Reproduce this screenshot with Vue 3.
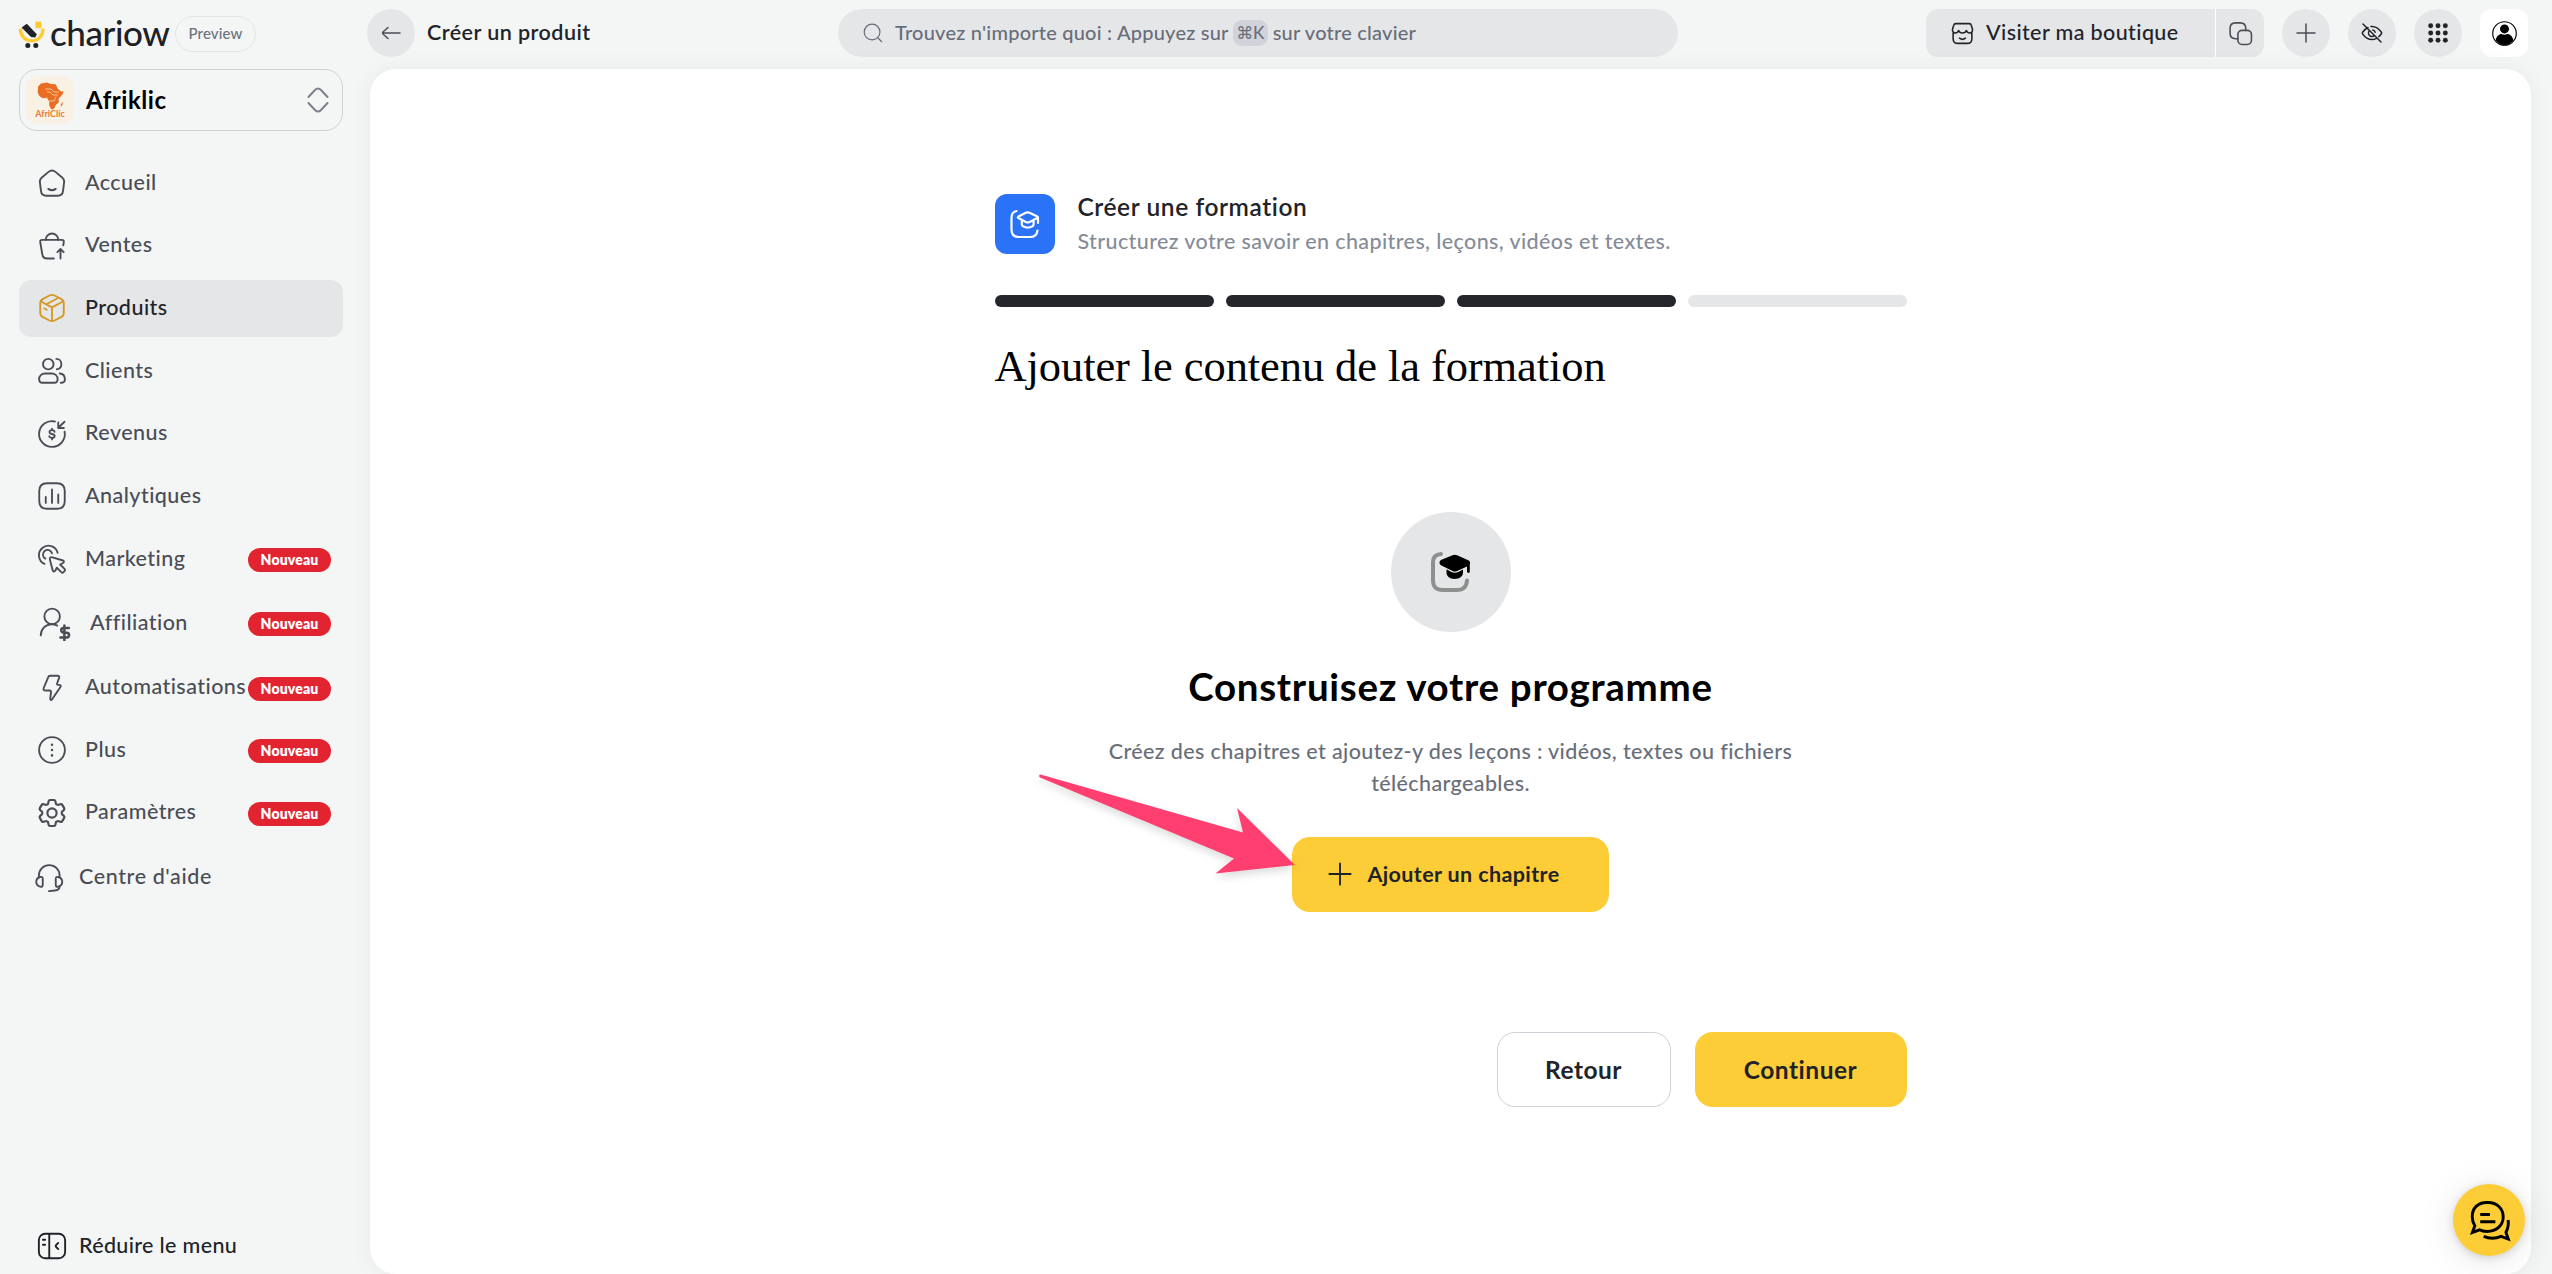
<template>
  <div class="app">
    <aside class="sidebar">
      <div class="brand">
        <svg class="brand-mark" viewBox="0 0 28 30">
          <path d="M2.5 8.5v1.2a11.2 11.2 0 0 0 22.4 0V8.5" fill="none" stroke="#ffcb35" stroke-width="3.4" />
          <path d="M17.4 1.6h6v6.6h-6z" fill="#ffcb35" />
          <path d="m3.6 7.6 5.2-3.8 10 10.4-1.6 3.400-4.200-.6z" fill="#202126" />
          <circle cx="9.8" cy="25.6" r="2.500" fill="#202126" />
          <circle cx="17.8" cy="25.6" r="2.500" fill="#202126" />
        </svg>
        <span class="brand-name">chariow</span>
        <span class="preview">Preview</span>
      </div>

      <div class="store">
        <div class="store-logo">
          <svg viewBox="0 0 48 48">
            <path
              d="M12 10.500 15 7.600l6-1.200 4 1.600 4.600.3 2.500 4.600 3 2.600 2.400-.2-.7 2.700-4.200 4.700.2 3.600-3 2.800-1.300 3-2 1.400-1.600-.4-1.800-4 .1-3.600-1.800-2.600-1.200-1-3.600.3-3.300-2.200-1.600-3.600zM34.800 28.500l2.200-3-.6 3.600-1.600 1.600z"
              fill="#ea6d24"
            />
            <path d="M19 13h6l3 3h5M21 16h3l3 3h5M20.500 21l1.600 4h6l2-4.500" fill="none" stroke="#fbe3c8" stroke-width="0.7" />
          </svg>
          <span>AfriClic</span>
        </div>
        <span class="store-name">Afriklic</span>
        <svg class="store-chevrons" viewBox="0 0 24 26">
          <path d="m2.500 10 6.700-7.200c1.800-1.700 3.800-1.700 5.600 0L21.500 10M2.500 16l6.700 7.200c1.800 1.700 3.800 1.700 5.600 0L21.500 16" />
        </svg>
      </div>

      <nav class="menu">
        <a
          v-for="item in menu"
          :key="item.label"
          class="menu-item"
          :class="[item.kind, { active: item.active }]"
        >
          <svg class="icon" :viewBox="item.viewBox || '0 0 24 24'">
            <path v-for="(d, i) in item.paths" :key="i" :d="d" />
            <path v-if="item.bold" :d="item.bold" stroke-width="2" />
          </svg>
          <span class="menu-label">{{ item.label }}</span>
          <span v-if="item.isNew" class="badge">Nouveau</span>
        </a>
      </nav>

      <a class="collapse">
        <svg class="icon" viewBox="0 0 24 24">
          <rect x="1.500" y="2.200" width="21" height="19.600" rx="5" />
          <path d="M9.800 2.500v19M4.700 7h1.800M4.700 11h1.800M17 9.500l-1.700 1.700c-.5.500-.5 1.100 0 1.600L17 14.500" />
        </svg>
        <span>Réduire le menu</span>
      </a>
    </aside>

    <div class="main">
      <header class="topbar">
        <div class="round back">
          <svg class="icon" viewBox="0 0 24 24"><path d="M3.500 12H21M9 6.500l-4.500 4c-1 1-1 2 0 3l4.500 4" /></svg>
        </div>
        <span class="page-title">Créer un produit</span>

        <div class="search">
          <svg class="icon" viewBox="0 0 24 24"><circle cx="11" cy="11" r="8.600" /><path d="m17.500 17.500 4 4" /></svg>
          <span>Trouvez n'importe quoi : Appuyez sur</span>
          <kbd>⌘K</kbd>
          <span>sur votre clavier</span>
        </div>

        <div class="actions">
          <div class="shop">
            <svg class="icon" viewBox="0 0 24 24">
              <path d="M3 11.500V17c0 3.300 1.300 4.500 4.500 4.500h9c3.200 0 4.500-1.200 4.500-4.500v-5.500M5.500 2.500h13c1.200 0 1.600.5 1.900 1.600L21.600 8c.2 2-.8 3.500-2.700 3.500-1.500 0-2.700-1-3.200-2.300-.5 1.400-1.900 2.300-3.700 2.300s-3.200-.9-3.700-2.300C7.800 10.500 6.600 11.500 5.100 11.500 3.200 11.500 2.200 10 2.400 8l1.200-3.900c.3-1.100.7-1.600 1.900-1.600zM9.200 16.500c1.600 1.300 4 1.300 5.600 0" />
            </svg>
            <span>Visiter ma boutique</span>
          </div>
          <div class="copy">
            <svg class="icon" viewBox="0 0 24 24">
              <rect x="9.500" y="9" width="13" height="13.500" rx="4" />
              <path d="M9.500 17H7.200C3.500 17 2 15.500 2 11.800V7C2 3.300 3.500 1.800 7.200 1.800h4.600C15.500 1.800 17 3.300 17 7v2" />
            </svg>
          </div>
          <div class="round">
            <svg class="icon" viewBox="0 0 24 24"><path d="M12 3v18M3 12h18" /></svg>
          </div>
          <div class="round hide">
            <svg class="icon" viewBox="0 0 24 24">
              <path d="M8 6.500C5.600 7.700 3.800 9.500 2.600 11.200c-.4.600-.4 1 0 1.600C4.300 15.300 7.600 18.600 12 18.600c1.500 0 2.900-.4 4.200-1M11 5.500c4.900-.5 8.500 3 10.400 5.700.4.600.4 1 0 1.600-.8 1.100-1.600 2-2.600 2.800M9.500 9.700a3.400 3.400 0 0 0 4.900 4.800M12.800 9a3.300 3.300 0 0 1 2.400 2.300M3 3l18 18" />
            </svg>
          </div>
          <div class="round">
            <svg class="dots" viewBox="0 0 24 24">
              <template v-for="y in [4, 12, 20]" :key="y">
                <circle v-for="x in [4, 12, 20]" :key="x" :cx="x" :cy="y" r="2.700" />
              </template>
            </svg>
          </div>
          <div class="avatar">
            <svg viewBox="0 0 24 24">
              <circle cx="12" cy="12" r="11.300" fill="#fff" stroke="#000" stroke-width="1.100" />
              <circle cx="12" cy="7.600" r="4.300" />
              <path d="M3.500 18.500c.7-3.700 3.200-6 5.800-6 1.700 1 3.700 1 5.400 0 2.600 0 5.100 2.300 5.800 6A10.800 10.800 0 0 1 12 23.300a10.800 10.800 0 0 1-8.500-4.800z" />
            </svg>
          </div>
        </div>
      </header>

      <main class="panel">
        <div class="content">
          <div class="head">
            <div class="head-icon">
              <svg class="icon" viewBox="0 0 32 32">
                <path d="M7.500 3C4 3.600 2.500 5.800 2.500 10v11.500c0 5 2.200 7.500 7.300 7.500h11.400c4.600 0 6.800-2.200 7.300-6.500" />
                <path d="m9.500 8.600 7.300-3.800c1.300-.6 2.400-.6 3.700 0l7.800 3.800c.9.500.9 1 0 1.500l-7.700 3.800c-1.300.6-2.500.6-3.800 0L9.500 10.100c-.9-.5-.9-1 0-1.500zM29 9.600V15M12.800 12v4.300c0 1 .4 1.500 1.200 2 3 1.700 6.400 1.700 9.400 0 .8-.5 1.200-1 1.200-2V12" />
              </svg>
            </div>
            <div>
              <h1>Créer une formation</h1>
              <p>Structurez votre savoir en chapitres, leçons, vidéos et textes.</p>
            </div>
          </div>

          <div class="steps">
            <span v-for="n in 4" :key="n" :class="{ done: n <= currentStep }"></span>
          </div>

          <h2 class="step-title">Ajouter le contenu de la formation</h2>

          <section class="empty">
            <div class="empty-icon">
              <svg viewBox="0 0 44 44">
                <path d="M12 4C6.500 4.500 4 7 4 12v18c0 7 3 10 10 10h14c6.500 0 9.600-3 10-9.500" fill="none" stroke="#8e908f" stroke-width="4" stroke-linecap="round" />
                <path d="M12.500 9.800 23.500 5.200c1.700-.7 3-.7 4.700 0l11.500 5.200c1.600.8 1.800 2.600 1.100 3.700V21.500a1.400 1.400 0 0 1-2.800 0v-5l-9.800 4.400c-1.700.7-3 .7-4.700 0L12.500 15.600c-2.600-1.300-2.600-4.500 0-5.800z" />
                <path d="M17.500 19.300l4.800 2.600c2.300 1.100 4.700 1.100 7 0l4.700-2.500v3.200c0 4-3.600 6.400-8.300 6.400s-8.200-2.400-8.200-6.400z" />
              </svg>
            </div>
            <h3>Construisez votre programme</h3>
            <p>Créez des chapitres et ajoutez-y des leçons : vidéos, textes ou fichiers téléchargeables.</p>
            <div class="add-wrap">
              <button class="btn primary add">
                <svg class="icon" viewBox="0 0 24 24"><path d="M12 3.500v17M3.500 12h17" /></svg>
                <span>Ajouter un chapitre</span>
              </button>
              <svg class="arrow" viewBox="0 0 270 120">
                <path d="M12.500 9.500 215 67.500 209 43l58 57-79.500 8.500L206 93.500 12 12.500c-1.500-1-1-3 .5-3z" />
              </svg>
            </div>
          </section>

          <div class="footer">
            <button class="btn outline">Retour</button>
            <button class="btn primary">Continuer</button>
          </div>
        </div>
      </main>
    </div>

    <div class="chat">
      <svg viewBox="0 0 44 44">
        <path d="M20.500 3.500h-1.500C10.200 3.500 4.300 9.500 4.300 17.800c0 4 1.300 7.200 2.700 9.500L4.500 34.200l7.300-2.700c2.300 1.300 5 1.700 7.700 1.700 9.500 0 16.500-6 16.500-14.800S29.500 3.500 20.500 3.500zM12.500 15.800h10M12.500 23.200h15.500M41 21.500c.8 4.500-.3 9-2.200 12.500l2.400 7-7.200-2.700c-5.500 2.300-12 2.600-18 0" />
      </svg>
    </div>
  </div>
</template>
<script setup>
import { ref } from 'vue'

const currentStep = ref(3)

const menu = ref([
  {
    label: 'Accueil',
    paths: [
      'M2.300 11.300c-.2-1.600.3-2.600 1.600-3.700l5.300-4.500c1.900-1.500 3.700-1.500 5.600 0l5.300 4.500c1.300 1.100 1.800 2.100 1.600 3.700l-.9 7.200c-.3 2.700-1.500 3.700-4.200 3.700H7.400c-2.700 0-3.900-1-4.200-3.700z',
      'M9 16.700c1.700 1.200 4.300 1.200 6 0',
    ],
  },
  {
    label: 'Ventes',
    paths: [
      'M13.500 22H8.200c-2.300 0-3.500-.8-3.900-3L2.600 9c-.2-1.300.3-1.900 1.600-1.900h15.600c1.300 0 1.800.6 1.600 1.900l-.4 2.500',
      'M7 7a5 5 0 0 1 10 0',
      'M18.800 22v-7.500m-2.500 2.400 2.500-2.600 2.500 2.600',
    ],
  },
  {
    label: 'Produits',
    active: true,
    paths: [
      'M10 2c1.300-.6 2.700-.6 4 0l5.200 2.700c1.600.9 2.200 1.600 2.200 3.200v8.200c0 1.600-.6 2.400-2.200 3.200L14 22c-1.300.6-2.700.6-4 0l-5.200-2.700c-1.600-.8-2.200-1.600-2.200-3.200V7.900c0-1.600.6-2.300 2.200-3.200z',
      'M3.200 6.800 12 11.500l8.800-4.700M12 11.500v10.800M7.500 9l9-4.800M5.800 12.400l2 1',
    ],
  },
  {
    label: 'Clients',
    paths: [
      'M13.200 6.500a4.200 4.200 0 1 1-8.400 0 4.200 4.200 0 0 1 8.400 0z',
      'M6.500 14h5.300c2.800 0 4.700 2 4.700 4.400 0 2-.9 3-2.600 3H4.300c-1.700 0-2.600-1-2.600-3C1.700 16 3.700 14 6.500 14z',
      'M15.500 2.300c2.400 0 4 1.900 4 4.200s-1.700 4.100-3.600 4.100',
      'M18.200 14c2.400.2 4 2 4.100 4.500.1 1.700-.9 2.800-2.400 2.900h-.9',
    ],
  },
  {
    label: 'Revenus',
    paths: [
      'M14.300 2A10.300 10.300 0 1 0 22.100 10.200',
      'M22 2.200l-4.700 4.600M17 2.800v4.400h4.500',
      'M14.100 10.200c-.2-.8-.9-1.300-2.100-1.300s-2 .5-2 1.500.9 1.400 2 1.600 2.100.6 2.100 1.600-.9 1.500-2.100 1.500-2-.5-2.200-1.400M12 7.800v1.100M12 15.100v1.200',
    ],
  },
  {
    label: 'Analytiques',
    paths: [
      'M8 1.800h8c4.300 0 6.200 1.900 6.200 6.200v8c0 4.300-1.900 6.200-6.200 6.200H8c-4.300 0-6.200-1.900-6.200-6.200V8c0-4.300 1.900-6.200 6.200-6.200z',
      'M7 12.800v4.700M12 6.700v10.800M17 10.700v6.800',
    ],
  },
  {
    label: 'Marketing',
    isNew: true,
    paths: [
      'M6 15.900A7.600 7.600 0 1 1 16.500 7',
      'M6.700 11.700A3.700 3.700 0 1 1 12 7.400',
      'M10.400 12.700c-.5-1.700.3-2.500 1.900-2l7.900 2.300c1.700.5 1.800 1.700.3 2.400l-2 1 3.500 3.500c.6.600.6 1.200 0 1.800l-.8.8c-.6.600-1.200.6-1.800 0L15.900 19l-1.100 2c-.9 1.500-2 1.300-2.400-.4z',
    ],
  },
  {
    label: 'Affiliation',
    kind: 'affiliation',
    isNew: true,
    viewBox: '0 0 28 28',
    paths: [
      'M18.300 8.300a6.200 6.200 0 1 1-12.400 0 6.200 6.200 0 0 1 12.400 0z',
      'M3 23.500c.2-5 3.800-8.900 8.700-8.900 1.700 0 3.200.4 4.500 1.100',
    ],
    bold: 'M25.500 17.600h-4.300a1.800 1.800 0 0 0 0 3.700h2.500a1.900 1.900 0 0 1 0 3.900h-5M21.900 15.600v12',
  },
  {
    label: 'Automatisations',
    isNew: true,
    paths: [
      'M8.900 3.500c.3-.9.7-1.300 1.600-1.300h6c1.200 0 1.600.7 1.200 1.700l-1.600 4.300c-.3.800 0 1.200.8 1.300h1c1.200.1 1.500 1 .7 1.900L12.100 21c-.9 1-1.700.6-1.500-.7l.6-5c.1-.9-.2-1.300-1.100-1.300H6.500c-1.200 0-1.600-.8-1.200-1.800z',
    ],
  },
  {
    label: 'Plus',
    isNew: true,
    paths: ['M22.300 12a10.300 10.300 0 1 1-20.600 0 10.300 10.300 0 0 1 20.600 0z'],
    bold: 'M12 7.700v.1M12 11.950v.1M12 16.200v.1',
  },
  {
    label: 'Paramètres',
    isNew: true,
    viewBox: '1.600 1.600 20.800 20.800',
    paths: [
      'M9.594 3.940c.09-.542.56-.94 1.110-.94h2.593c.55 0 1.020.398 1.110.94l.213 1.281c.063.374.313.686.645.87.074.04.147.083.22.127.325.196.72.257 1.075.124l1.217-.456a1.125 1.125 0 0 1 1.370.49l1.296 2.247a1.125 1.125 0 0 1-.26 1.431l-1.003.827c-.293.241-.438.613-.43.992a7.723 7.723 0 0 1 0 .255c-.008.378.137.75.43.991l1.004.827c.424.35.534.955.26 1.430l-1.298 2.247a1.125 1.125 0 0 1-1.369.491l-1.217-.456c-.355-.133-.75-.072-1.076.124a6.470 6.470 0 0 1-.22.128c-.331.183-.581.495-.644.869l-.213 1.281c-.09.543-.56.94-1.110.94h-2.594c-.55 0-1.019-.398-1.110-.94l-.213-1.281c-.062-.374-.312-.686-.644-.87a6.520 6.520 0 0 1-.22-.127c-.325-.196-.72-.257-1.076-.124l-1.217.456a1.125 1.125 0 0 1-1.369-.49l-1.297-2.247a1.125 1.125 0 0 1 .26-1.431l1.004-.827c.292-.24.437-.613.43-.991a6.932 6.932 0 0 1 0-.255c.007-.38-.138-.751-.43-.992l-1.004-.827a1.125 1.125 0 0 1-.26-1.430l1.297-2.247a1.125 1.125 0 0 1 1.370-.491l1.216.456c.356.133.751.072 1.076-.124.072-.044.146-.086.22-.128.332-.183.582-.495.644-.869l.214-1.280z',
      'M15.200 12a3.200 3.200 0 1 1-6.400 0 3.200 3.200 0 0 1 6.400 0z',
    ],
  },
  {
    label: "Centre d'aide",
    kind: 'help',
    paths: [
      'M3.900 11.500V10a8.300 8.300 0 0 1 16.600 0v1.500',
      'M5 11.200c1.500-.4 2 .2 2 1.500v4.700c0 1.300-.5 1.900-2 1.500-1.700-.4-3.200-1.700-3.200-3.900s1.500-3.300 3.200-3.800z',
      'M19.400 11.200c-1.500-.4-2 .2-2 1.500v4.700c0 1.300.5 1.900 2 1.500 1.700-.4 3.200-1.700 3.200-3.900s-1.500-3.300-3.200-3.800z',
      'M20.500 18.800c0 2-1.600 3-3.800 3.200l-4.700.5',
    ],
  },
])
</script>
<style>
body {
  margin: 0;
  background: #f4f6f6;
}
</style>
<style scoped>
.app {
  display: flex;
  width: 100%;
  height: 1274px;
  overflow: hidden;
  background: #f4f6f6;
  color: #212329;
  font-family: Lato, 'Open Sans', sans-serif;
  font-size: 21.5px;
  font-weight: 500;
  letter-spacing: 0.021em;
  position: relative;
}

.icon {
  fill: none;
  stroke: currentColor;
  stroke-width: 1.5;
  stroke-linecap: round;
  stroke-linejoin: round;
  flex: none;
}

h1,
h2,
h3,
p {
  margin: 0;
}

/* Sidebar */
.sidebar {
  display: flex;
  flex-direction: column;
  box-sizing: border-box;
  width: 370px;
  flex: none;
  padding: 0 27px 0 19px;
}

.brand {
  display: flex;
  align-items: center;
  height: 69px;
}

.brand-mark {
  width: 28px;
  height: 30px;
  margin-left: -1px;
}

.brand-name {
  width: 119px;
  margin: 0 6px 6px 4px;
  font-size: 35px;
  line-height: 40px;
  letter-spacing: -0.012em;
  color: #202126;
}

.preview {
  box-sizing: border-box;
  width: 81px;
  height: 36px;
  margin-bottom: 2px;
  border: 1px solid #e3e5e7;
  border-radius: 18px;
  font-size: 15px;
  line-height: 33px;
  letter-spacing: 0.01em;
  text-align: center;
  color: #6b717d;
}

.store {
  display: flex;
  align-items: center;
  box-sizing: border-box;
  height: 62px;
  padding: 0 12px 0 6px;
  border: 1px solid #cdd0d6;
  border-radius: 18px;
}

.store-logo {
  position: relative;
  width: 48px;
  height: 48px;
  border-radius: 12px;
  background: #f9f1e3;
}

.store-logo svg {
  display: block;
}

.store-logo span {
  position: absolute;
  left: 0;
  right: 0;
  bottom: 4px;
  font-size: 9px;
  font-weight: 700;
  line-height: 12px;
  letter-spacing: 0;
  text-align: center;
  color: #ea7a3a;
}

.store-name {
  flex: 1;
  margin-left: 12px;
  padding-bottom: 1px;
  font-size: 24px;
  font-weight: 700;
  letter-spacing: 0.022em;
  color: #000;
}

.store-chevrons {
  width: 24px;
  height: 26px;
  fill: none;
  stroke: #7b818d;
  stroke-width: 2;
  stroke-linecap: round;
}

.menu {
  display: flex;
  flex-direction: column;
  gap: 5.7px;
  margin-top: 23.5px;
}

.menu-item {
  display: flex;
  align-items: center;
  box-sizing: border-box;
  height: 57px;
  padding: 0 12px 0 18px;
  border-radius: 12px;
  color: #4a4d55;
}

.menu-item.affiliation {
  height: 60px;
}

.menu-item.help {
  height: 62px;
  padding-left: 15px;
}

.menu-item.active {
  background: #e5e6e8;
  color: #212329;
}

.menu-item .icon {
  width: 30px;
  height: 30px;
}

.menu-item.affiliation .icon {
  width: 35px;
  height: 35px;
}

.menu-item.active .icon {
  color: #d49a27;
}

.menu-label {
  margin-left: 18px;
  padding-bottom: 3px;
  white-space: nowrap;
}

.help .menu-label {
  margin-left: 15px;
  padding-bottom: 4px;
  letter-spacing: 0.028em;
}

.badge {
  flex: none;
  width: 83px;
  height: 24px;
  margin: 2px 0 0 auto;
  border-radius: 12px;
  background: #e22430;
  color: #fff;
  font-size: 14px;
  font-weight: 800;
  line-height: 23px;
  letter-spacing: 0.01em;
  text-align: center;
}

.menu-item:nth-child(9) .menu-label {
  width: 163px;
}

.collapse {
  display: flex;
  align-items: center;
  gap: 12px;
  margin: auto 0 13px 18px;
  color: #212329;
  letter-spacing: 0.016em;
}

.collapse span {
  padding-bottom: 3px;
}

.collapse .icon {
  width: 30px;
  height: 30px;
}

/* Top bar */
.main {
  display: flex;
  flex-direction: column;
  flex: 1;
  padding-right: 21px;
}

.topbar {
  display: flex;
  align-items: center;
  height: 66px;
  padding-bottom: 3px;
  margin: 0 3px 0 -3px;
}

.round {
  display: flex;
  align-items: center;
  justify-content: center;
  width: 48px;
  height: 48px;
  border-radius: 50%;
  background: #e5e6e8;
  color: #4a4d55;
}

.round.hide {
  color: #212329;
}

.round .icon {
  width: 24px;
  height: 24px;
}

.page-title {
  width: 411px;
  margin-left: 12px;
  padding-bottom: 3px;
  font-weight: 600;
}

.search {
  display: flex;
  align-items: center;
  box-sizing: border-box;
  width: 840px;
  height: 48px;
  padding-left: 24px;
  border-radius: 24px;
  background: #e5e6e8;
  color: #686e79;
  font-size: 20px;
  letter-spacing: 0.011em;
}

.search span {
  padding-bottom: 2px;
}

.search .icon {
  width: 22px;
  height: 22px;
  margin-right: 11px;
  stroke-width: 1.3;
}

.search kbd {
  width: 35px;
  height: 26px;
  margin: 0 5px 0 4px;
  border-radius: 9px;
  background: #d0d3d9;
  font-family: Lato, 'DejaVu Sans', sans-serif;
  font-size: 17px;
  line-height: 26px;
  letter-spacing: -0.02em;
  text-align: center;
}

.actions {
  display: flex;
  align-items: center;
  gap: 18px;
  margin: 0 0 0 auto;
}

.shop,
.copy {
  display: flex;
  align-items: center;
  box-sizing: border-box;
  height: 48px;
  background: #e5e6e8;
}

.shop {
  width: 290px;
  gap: 11px;
  padding-left: 24px;
  margin-right: -18px;
  border-right: 1px solid #fff;
  border-radius: 12px 0 0 12px;
  letter-spacing: 0.018em;
}

.shop span {
  padding-bottom: 3px;
}

.shop .icon,
.copy .icon {
  width: 25px;
  height: 25px;
}

.copy {
  justify-content: center;
  width: 48px;
  border-radius: 0 12px 12px 0;
  color: #4a4d55;
}

.dots {
  width: 22px;
  height: 22px;
  fill: #212329;
}

.avatar {
  display: flex;
  align-items: center;
  justify-content: center;
  width: 48px;
  height: 48px;
  border-radius: 12px;
  background: #fff;
}

.avatar svg {
  width: 25px;
  height: 25px;
}

/* Panel */
.panel {
  flex: 1;
  border-radius: 26px;
  background: #fff;
  box-shadow: 0 0 24px rgba(30, 40, 40, 0.05);
}

.content {
  width: 912px;
  margin: 0 auto;
  padding-top: 121px;
}

.head {
  display: flex;
  align-items: center;
  gap: 23px;
}

.head-icon {
  display: flex;
  align-items: center;
  justify-content: center;
  width: 60px;
  height: 60px;
  border-radius: 12px;
  background: #2a72f8;
  color: #fff;
}

.head-icon .icon {
  width: 32px;
  height: 32px;
  stroke-width: 2.2;
}

.head h1 {
  font-size: 24.5px;
  font-weight: 600;
  line-height: 34px;
  letter-spacing: 0.024em;
}

.head p {
  line-height: 34px;
  letter-spacing: 0.018em;
  color: #868c97;
}

.steps {
  display: grid;
  grid-template-columns: repeat(4, 1fr);
  gap: 12px;
  margin-top: 37px;
}

.steps span {
  height: 12px;
  border-radius: 6px;
  background: #e5e6e8;
}

.steps .done {
  background: #25262b;
}

.step-title {
  margin-top: 31px;
  font-family: 'Liberation Serif', serif;
  font-size: 44.5px;
  font-weight: 400;
  line-height: 56px;
  letter-spacing: -0.002em;
  color: #000;
}

.empty {
  display: flex;
  flex-direction: column;
  align-items: center;
  margin-top: 118px;
  text-align: center;
}

.empty-icon {
  display: flex;
  align-items: center;
  justify-content: center;
  width: 120px;
  height: 120px;
  border-radius: 50%;
  background: #e5e6e8;
}

.empty-icon svg {
  width: 44px;
  height: 44px;
}

.empty h3 {
  margin-top: 31px;
  font-size: 38.5px;
  font-weight: 700;
  line-height: 46px;
  letter-spacing: 0.018em;
  color: #000;
}

.empty p {
  width: 720px;
  margin-top: 26px;
  line-height: 32px;
  letter-spacing: 0.018em;
  color: #686e79;
}

.add-wrap {
  position: relative;
  margin-top: 38px;
}

.btn {
  display: flex;
  align-items: center;
  justify-content: center;
  box-sizing: border-box;
  height: 75px;
  padding: 0 49px;
  border: 0;
  border-radius: 18px;
  font: inherit;
  font-size: 24.5px;
  font-weight: 700;
  letter-spacing: 0.02em;
  color: #212329;
}

.btn.primary {
  background: #fdcd38;
}

.btn.outline {
  width: 174px;
  border: 1px solid #cdd0d6;
  background: #fff;
}

.btn.add {
  width: 317px;
  gap: 12px;
  padding: 0 49px 2px 33px;
  font-size: 21.5px;
  letter-spacing: 0.018em;
  white-space: nowrap;
}

.add .icon {
  width: 30px;
  height: 30px;
}

/* Callout arrow over the button edge */
.arrow {
  position: absolute;
  left: -264px;
  top: -72px;
  width: 270px;
  height: 120px;
  fill: #ff3f70;
  filter: drop-shadow(0 4px 4px rgba(0, 0, 0, 0.14));
}

.footer {
  display: flex;
  justify-content: flex-end;
  gap: 24px;
  margin-top: 120px;
}

.footer .primary {
  width: 212px;
}

.chat {
  position: absolute;
  left: 2453px;
  top: 1184px;
  display: flex;
  align-items: center;
  justify-content: center;
  width: 72px;
  height: 72px;
  border-radius: 50%;
  background: #fdcd38;
  box-shadow: 0 2px 8px rgba(0, 0, 0, 0.14), 0 4px 36px rgba(0, 0, 0, 0.1);
}

.chat svg {
  width: 43px;
  height: 43px;
  fill: none;
  stroke: #000;
  stroke-width: 3;
}
</style>
